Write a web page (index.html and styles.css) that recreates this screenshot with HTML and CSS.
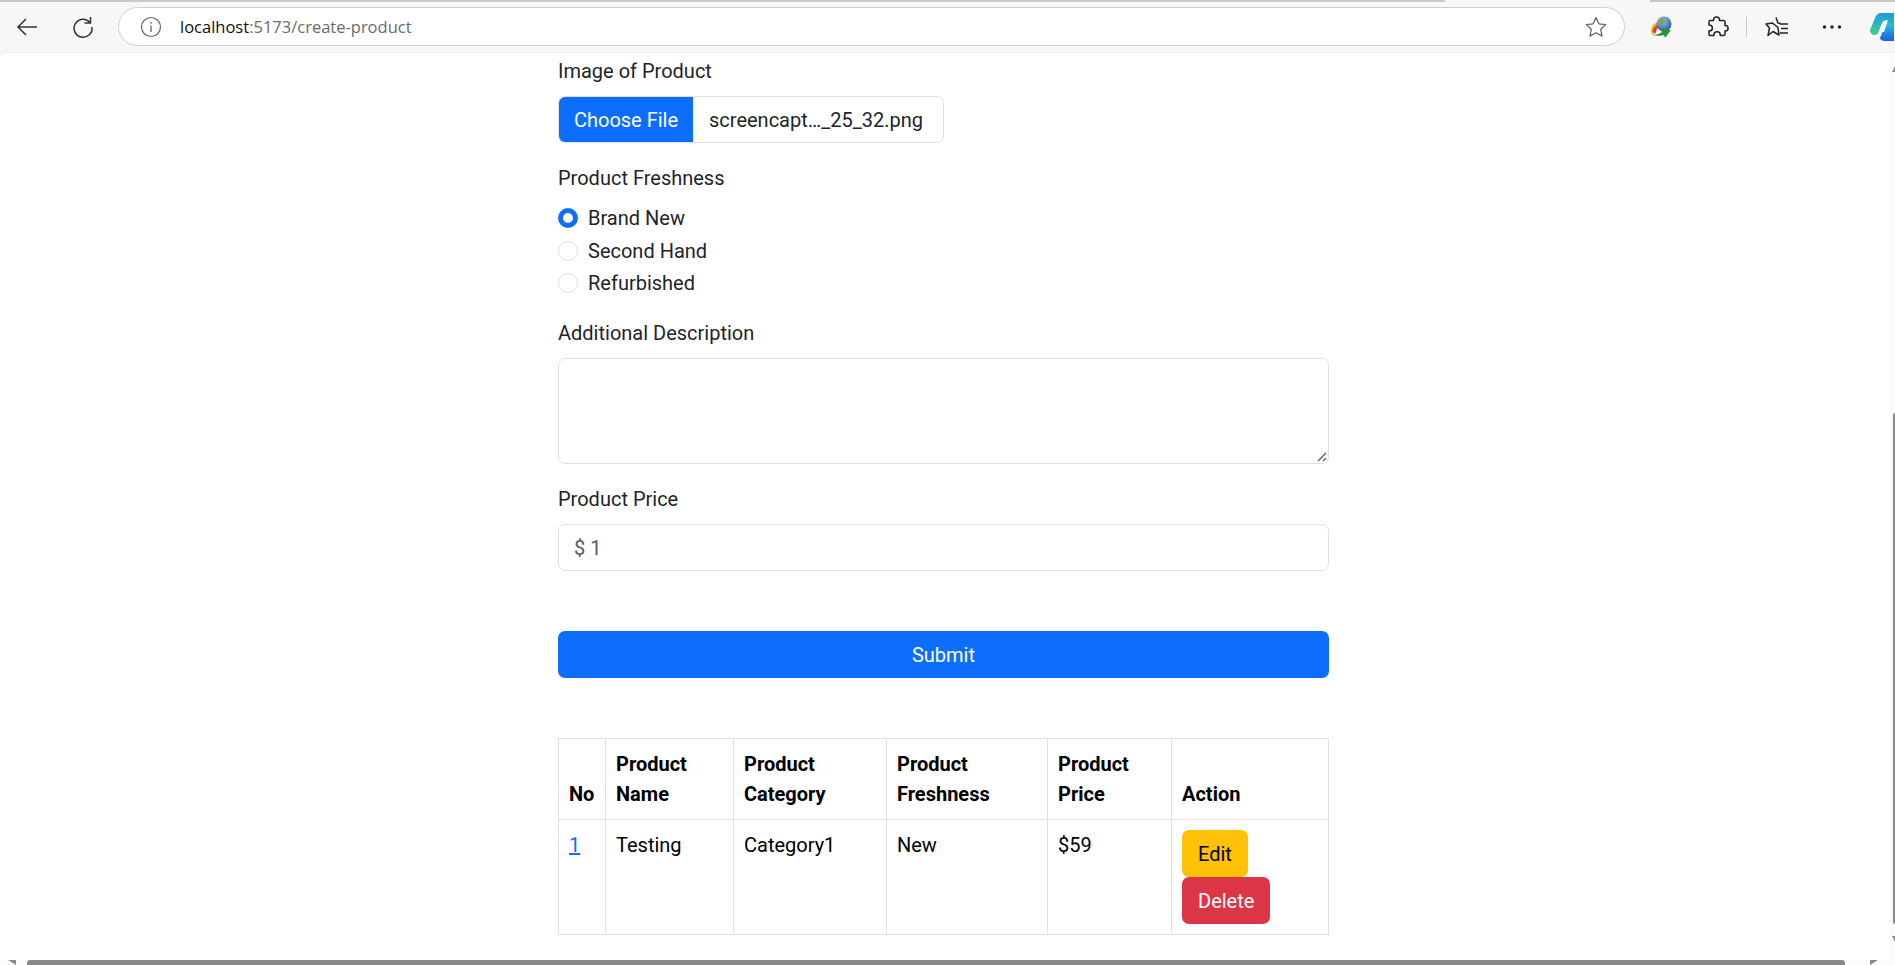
FILE: index.html
```html
<!DOCTYPE html>
<html>

<head>
<meta charset="utf-8">
<meta name="viewport" content="width=device-width, initial-scale=1">

<title>Create Product</title>

<link rel="stylesheet" href="styles.css">
</head>

<body>

	<div class="loadline"></div>

	<div class="toolbar">
		<svg class="back" width="24" height="24" viewBox="0 0 24 24"><path d="M22 12H3M11 4l-8 8 8 8" fill="none" stroke="#333" stroke-width="1.5"/></svg>
		<svg class="reload" width="24" height="24" viewBox="0 0 24 24"><path d="M19 7.500A9 9 0 1 0 21 12M19.500 2v6h-6" fill="none" stroke="#333" stroke-width="1.5"/></svg>
		<div class="addressbar">
			<svg class="info" width="22" height="22" viewBox="0 0 22 22"><circle cx="11" cy="11" r="9.500" fill="none" stroke="#666" stroke-width="1.200"/><path d="M11 9.500v6.500M11 6v1.800" stroke="#666" stroke-width="1.300"/></svg>
			<span class="url"><span class="host">localhost</span>:5173/create-product</span>
			<svg class="star" width="24" height="24" viewBox="0 0 24 24"><path d="M12 2.500l2.900 6.300 6.800.8-5 4.700 1.300 6.800-6-3.400-6 3.400 1.300-6.800-5-4.700 6.800-.8z" fill="none" stroke="#666" stroke-width="1.300" stroke-linejoin="round"/></svg>
		</div>
		<svg class="ext idm" width="24" height="24" viewBox="0 0 24 24">
			<defs>
				<radialGradient id="globe" cx="0.4" cy="0.3" r="0.8">
					<stop offset="0" stop-color="#9cc4ee"/>
					<stop offset="1" stop-color="#1d4f9c"/>
				</radialGradient>
			</defs>
			<path d="M1 16c0-5 3-8 7-9l3 3c-3 1-5 3-5 8l-3 2c-1-1-2-2-2-4z" fill="#e8b32a"/>
			<path d="M3 17c0-4 2-6 5-7l1 2c-2 1-3 3-3 6z" fill="#d8402f"/>
			<circle cx="14" cy="9" r="7.500" fill="url(#globe)"/>
			<path d="M10 4c2-1 5 0 5 2s-2 5-4 4-2-4-1-6z" fill="#7aa94a"/>
			<path d="M3 20c3 0 7-1 9-3l-2-3 11 1-6 8-1-3c-3 1-8 1-11 0z" fill="#2f9130"/>
		</svg>
		<svg class="ext puzzle" width="24" height="24" viewBox="0 0 24 24"><path d="M8.500 5.500V5a3 3 0 0 1 6 0v.5h4a1.500 1.500 0 0 1 1.500 1.500v3.500h.3a2.800 2.800 0 0 1 0 5.600H20v3a1.500 1.500 0 0 1-1.500 1.500h-3.200v-.6a3.200 3.200 0 0 0-6.400 0v.6H5.500A1.500 1.500 0 0 1 4 19v-3.200h.5a2.900 2.900 0 0 0 0-5.800H4V7a1.500 1.500 0 0 1 1.500-1.500z" fill="none" stroke="#222" stroke-width="1.500" stroke-linejoin="round"/></svg>
		<div class="sep"></div>
		<svg class="ext favs" width="24" height="24" viewBox="0 0 24 24"><path d="M11 2.500l2 5.500 2.500.5M13 12.500l1 7.500-6-3.500-5 4 1.500-7.500L1 9l6.500-1z" fill="none" stroke="#222" stroke-width="1.500" stroke-linejoin="round"/><path d="M15 9h8M16 13.500h7M15 18h8" stroke="#222" stroke-width="1.500"/></svg>
		<svg class="ext more" width="24" height="24" viewBox="0 0 24 24"><circle cx="4.500" cy="12" r="1.700" fill="#222"/><circle cx="12" cy="12" r="1.700" fill="#222"/><circle cx="19.500" cy="12" r="1.700" fill="#222"/></svg>
		<svg class="copilot" width="24" height="28" viewBox="0 0 24 28">
			<defs>
				<linearGradient id="cop-a" x1="0" y1="0" x2="0" y2="1">
					<stop offset="0" stop-color="#1f9be0"/>
					<stop offset="1" stop-color="#3fcf8e"/>
				</linearGradient>
				<linearGradient id="cop-b" x1="0" y1="0" x2="0" y2="1">
					<stop offset="0" stop-color="#27c3d8"/>
					<stop offset="1" stop-color="#1a5fe0"/>
				</linearGradient>
			</defs>
			<path d="M0 17L5 5c1-3 3-5 6-5h13v10H12L8 20c-1 2-3 2-5 2-2-1-3-3-3-5z" fill="url(#cop-a)"/>
			<path d="M15 10h9v18H15c-2 0-5-1-5-3l5-12z" fill="url(#cop-b)"/>
			<path d="M13 8l5-1-4 12h-4z" fill="#fff"/>
		</svg>
	</div>

	<div class="viewport">
		<div class="page">
			<form class="product-form">
				<div class="field first">
					<label class="label">Image of Product</label>
					<div class="filebox">
						<span class="filebtn">Choose File</span>
						<span class="filename">screencapt…_25_32.png</span>
					</div>
				</div>

				<div class="field">
					<label class="label">Product Freshness</label>
					<div class="radios">
						<div class="radio-row"><span class="radio checked"></span>Brand New</div>
						<div class="radio-row"><span class="radio"></span>Second Hand</div>
						<div class="radio-row"><span class="radio"></span>Refurbished</div>
					</div>
				</div>

				<div class="field">
					<label class="label">Additional Description</label>
					<div class="textarea">
						<svg class="grip" width="10" height="10" viewBox="0 0 10 10"><path d="M1 9l8-8M6 9l3-3" stroke="#555" stroke-width="1.200"/></svg>
					</div>
				</div>

				<div class="field">
					<label class="label">Product Price</label>
					<div class="textinput">$ 1</div>
				</div>

				<button type="button" class="submit">Submit</button>
			</form>

			<table class="products">
				<thead>
					<tr>
						<th class="col-no">No</th>
						<th class="col-name">Product Name</th>
						<th class="col-cat">Product Category</th>
						<th class="col-fresh">Product Freshness</th>
						<th class="col-price">Product Price</th>
						<th>Action</th>
					</tr>
				</thead>
				<tbody>
					<tr>
						<td><a href="#">1</a></td>
						<td>Testing</td>
						<td>Category1</td>
						<td>New</td>
						<td>$59</td>
						<td class="actions">
							<button type="button" class="btn edit">Edit</button>
							<button type="button" class="btn delete">Delete</button>
						</td>
					</tr>
				</tbody>
			</table>
		</div>

		<div class="vscroll">
			<div class="varrow up"></div>
			<div class="vthumb"></div>
			<div class="varrow down"></div>
		</div>
	</div>

	<div class="hscroll">
		<div class="harrow left"></div>
		<div class="hthumb"></div>
		<div class="harrow right"></div>
	</div>

</body>
</html>
```

FILE: styles.css
```css
* {
	box-sizing: border-box;
}

html, body {
	height: 100%;
}

body {
	margin: 0;
	display: flex;
	flex-direction: column;
	overflow: hidden;
	background-color: #f7f7f7;
	font-family: Roboto, "Liberation Sans", sans-serif;
	font-size: 20px;
	line-height: 30px;
	color: #212529;
}

.loadline {
	height: 2px;
	background: linear-gradient(to right, #c9c9c9 1445px, #f7f7f7 1445px, #f7f7f7 1650px, #c9c9c9 1650px);
}

.toolbar {
	height: 50px;
	flex-shrink: 0;
	display: flex;
	align-items: center;
	background-color: #f7f7f7;
	padding-bottom: 1px;
}

.back {
	margin-left: 15px;
}

.reload {
	margin-left: 32px;
}

.addressbar {
	width: 1507px;
	height: 39px;
	margin-left: 23px;
	padding: 0 16px 0 21px;
	display: flex;
	align-items: center;
	background-color: #fff;
	border: 1px solid #cfcfcf;
	border-radius: 20px;
}

.url {
	flex: 1;
	margin-left: 18px;
	font-family: "Open Sans", sans-serif;
	font-size: 16.500px;
	color: #6b6b6b;
}

.host {
	color: #111;
}

.ext {
	flex-shrink: 0;
}

.idm {
	margin-left: 25px;
}

.puzzle {
	margin-left: 31px;
}

.sep {
	width: 1px;
	height: 20px;
	margin-left: 17px;
	background-color: #c8c8c8;
}

.favs {
	margin-left: 18px;
}

.more {
	margin-left: 31px;
}

.copilot {
	margin-left: 26px;
	flex-shrink: 0;
}

.viewport {
	flex: 1;
	display: flex;
	min-height: 0;
	background-color: #fff;
	border-top: 1px solid #ececec;
	border-top-left-radius: 6px;
}

.page {
	flex: 1;
	padding-left: 558px;
	padding-right: 561px;
	overflow: hidden;
}

.vscroll {
	width: 5px;
	display: flex;
	flex-direction: column;
	align-items: flex-end;
	background-color: #fbfbfb;
}

.vthumb {
	width: 2px;
	height: 511px;
	margin-top: 341px;
	background-color: #8a8a8a;
	border-radius: 2px 0 0 2px;
}

.varrow {
	width: 0;
	height: 0;
	border-style: solid;
}

.varrow.up {
	margin-top: 13px;
	border-width: 0 0 6px 3px;
	border-color: transparent transparent #8a8a8a transparent;
}

.varrow.down {
	margin-top: 12px;
	border-width: 6px 0 0 3px;
	border-color: #8a8a8a transparent transparent transparent;
}

.hscroll {
	height: 5px;
	flex-shrink: 0;
	display: flex;
	align-items: flex-start;
	background-color: #fbfbfb;
}

.hthumb {
	width: 1818px;
	height: 5px;
	margin-left: 11px;
	background-color: #8a8a8a;
	border-radius: 3px 3px 0 0;
}

.harrow {
	width: 0;
	height: 0;
	border-style: solid;
}

.harrow.left {
	margin-left: 8px;
	border-width: 0 8px 5px 0;
	border-color: transparent #8a8a8a transparent transparent;
}

.harrow.right {
	margin-left: 25px;
	border-width: 0 0 5px 8px;
	border-color: transparent transparent transparent #8a8a8a;
}

.label {
	display: block;
	margin-bottom: 10px;
}

.field {
	margin-bottom: 20px;
}

.field.first {
	margin-top: 3px;
}

.filebox {
	width: 386px;
	height: 47px;
	display: flex;
	border: 1px solid #dee2e6;
	border-radius: 7px;
	overflow: hidden;
}

.filebtn {
	width: 134px;
	display: flex;
	align-items: center;
	justify-content: center;
	background-color: #0d6efd;
	color: #fff;
}

.filename {
	padding-left: 16px;
	display: flex;
	align-items: center;
}

.radios {
	display: flex;
	flex-direction: column;
	margin: -1px 0 -1.500px;
}

.radio-row {
	display: flex;
	align-items: center;
	height: 32.500px;
}

.radio {
	width: 20px;
	height: 20px;
	margin-right: 10px;
	border: 1px solid #dee2e6;
	border-radius: 50%;
	background-color: #fff;
}

.radio.checked {
	border: 5.500px solid #0d6efd;
}

.textarea {
	position: relative;
	height: 106px;
	border: 1px solid #dee2e6;
	border-radius: 7px;
}

.grip {
	position: absolute;
	right: 1px;
	bottom: 1px;
}

.textinput {
	height: 47px;
	padding: 0 15px;
	display: flex;
	align-items: center;
	border: 1px solid #dee2e6;
	border-radius: 7px;
	color: #595c5f;
}

.submit {
	display: block;
	width: 100%;
	height: 47px;
	margin-top: 60px;
	border: 0;
	border-radius: 7px;
	background-color: #0d6efd;
	color: #fff;
	font: inherit;
}

.products {
	width: 100%;
	margin-top: 60px;
	border-collapse: collapse;
	color: #000;
}

.products th, .products td {
	border: 1px solid #dee2e6;
	padding: 10px;
	text-align: left;
}

.products th {
	vertical-align: bottom;
	font-weight: 700;
}

.products td {
	vertical-align: top;
	height: 114px;
}

.col-no {
	width: 47px;
}

.col-name {
	width: 128px;
}

.col-cat {
	width: 153px;
}

.col-fresh {
	width: 161px;
}

.col-price {
	width: 124px;
}

.products a {
	color: #0d6efd;
}

.btn {
	display: block;
	height: 47px;
	padding: 0 16px;
	border: 0;
	border-radius: 7px;
	font: inherit;
}

.edit {
	background-color: #ffc107;
	color: #000;
}

.delete {
	background-color: #dc3545;
	color: #fff;
}
```
